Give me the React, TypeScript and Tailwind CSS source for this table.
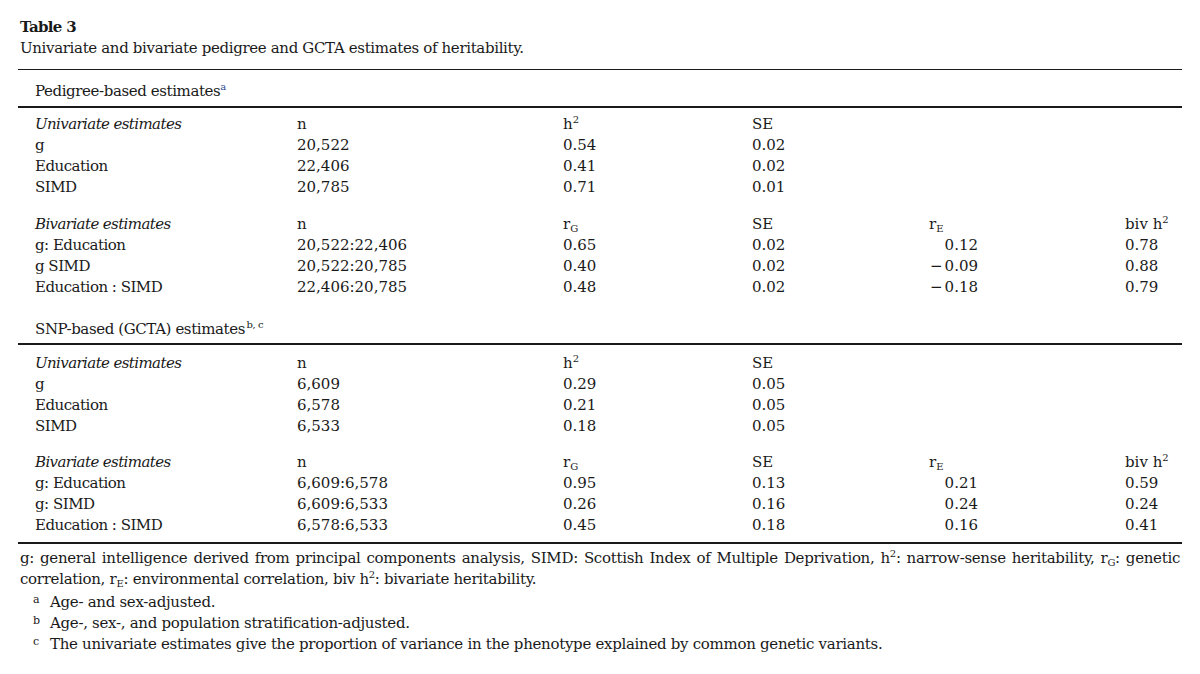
import React from 'react';

type Row = { label: React.ReactNode; cells: React.ReactNode[] };

const Sub = ({ children }: { children: React.ReactNode }) => (
	<span className="text-[10px] leading-none align-[-3px]">{children}</span>
);

const Sup = ({ children }: { children: React.ReactNode }) => (
	<span className="text-[10px] leading-none align-[6px]">{children}</span>
);

const RE = ({ v, neg }: { v: string; neg?: boolean }) => (
	<span className="inline-block w-[49px] text-right">
		{neg && <span className="mr-[2px]">−</span>}
		{v}
	</span>
);

const cols = 'grid grid-cols-[262px_266px_189px_177px_196px_1fr] h-[21px] items-center';

const Block = ({ head, rows }: { head: Row; rows: Row[] }) => (
	<div>
		<div className={cols}>
			<div className="italic tracking-[-0.6px]">{head.label}</div>
			{head.cells.map((c, i) => (
				<div key={i}>{c}</div>
			))}
		</div>
		{rows.map((r, i) => (
			<div key={i} className={cols}>
				<div className="tracking-[-0.5px]">{r.label}</div>
				{r.cells.map((c, j) => (
					<div key={j}>{c}</div>
				))}
			</div>
		))}
	</div>
);

const uniHead = (label: string): Row => ({
	label,
	cells: [
		'n',
		<>
			h<Sup>2</Sup>
		</>,
		'SE',
	],
});

const biHead = (label: string): Row => ({
	label,
	cells: [
		'n',
		<>
			r<Sub>G</Sub>
		</>,
		'SE',
		<>
			r<Sub>E</Sub>
		</>,
		<>
			biv h<Sup>2</Sup>
		</>,
	],
});

export default function App() {
	return (
		<div className="w-[1200px] h-[674px] bg-white text-[#1a1a1a] font-['DejaVu_Serif',serif] text-[15px] leading-[21px] px-[18px] pt-[17px]">
			<div className="font-bold px-[2px] tracking-[-0.7px]">Table 3</div>
			<div className="px-[2px] tracking-[-0.35px]">Univariate and bivariate pedigree and GCTA estimates of heritability.</div>

			<div className="mt-[10px] border-t-[1.5px] border-[#1a1a1a]" />
			<div className="pl-[17px] pt-[11px] pb-[4px] tracking-[-0.4px]">
				Pedigree-based estimates<Sup><span className="text-[#2b4a90]">a</span></Sup>
			</div>
			<div className="border-t-2 border-[#1a1a1a]" />

			<div className="pl-[17px] pt-[6px]">
				<Block
					head={uniHead('Univariate estimates')}
					rows={[
						{ label: 'g', cells: ['20,522', '0.54', '0.02'] },
						{ label: 'Education', cells: ['22,406', '0.41', '0.02'] },
						{ label: 'SIMD', cells: ['20,785', '0.71', '0.01'] },
					]}
				/>
				<div className="h-[16px]" />
				<Block
					head={biHead('Bivariate estimates')}
					rows={[
						{ label: 'g: Education', cells: ['20,522:22,406', '0.65', '0.02', <RE v="0.12" />, '0.78'] },
						{ label: 'g SIMD', cells: ['20,522:20,785', '0.40', '0.02', <RE v="0.09" neg />, '0.88'] },
						{ label: 'Education : SIMD', cells: ['22,406:20,785', '0.48', '0.02', <RE v="0.18" neg />, '0.79'] },
					]}
				/>
				<div className="pt-[21px] pb-[3px] tracking-[-0.4px]">
					SNP-based (GCTA) estimates<Sup>&thinsp;b, c</Sup>
				</div>
			</div>
			<div className="border-t-2 border-[#1a1a1a]" />

			<div className="pl-[17px] pt-[8px]">
				<Block
					head={uniHead('Univariate estimates')}
					rows={[
						{ label: 'g', cells: ['6,609', '0.29', '0.05'] },
						{ label: 'Education', cells: ['6,578', '0.21', '0.05'] },
						{ label: 'SIMD', cells: ['6,533', '0.18', '0.05'] },
					]}
				/>
				<div className="h-[15px]" />
				<Block
					head={biHead('Bivariate estimates')}
					rows={[
						{ label: 'g: Education', cells: ['6,609:6,578', '0.95', '0.13', <RE v="0.21" />, '0.59'] },
						{ label: 'g: SIMD', cells: ['6,609:6,533', '0.26', '0.16', <RE v="0.24" />, '0.24'] },
						{ label: 'Education : SIMD', cells: ['6,578:6,533', '0.45', '0.18', <RE v="0.16" />, '0.41'] },
					]}
				/>
			</div>
			<div className="mt-[6px] border-t-2 border-[#1a1a1a]" />

			<div className="pt-[4px] px-[2px] tracking-[-0.3px]">
				<p className="text-justify [text-align-last:justify]">
					g: general intelligence derived from principal components analysis, SIMD: Scottish Index of Multiple
					Deprivation, h<Sup>2</Sup>: narrow-sense heritability, r<Sub>G</Sub>: genetic
				</p>
				<p>
					correlation, r<Sub>E</Sub>: environmental correlation, biv h<Sup>2</Sup>: bivariate heritability.
				</p>
				<div className="flex pl-[13px] mt-[2px]">
					<span className="w-[17px] text-[11px] leading-none pt-[2px]">a</span>
					<span>Age- and sex-adjusted.</span>
				</div>
				<div className="flex pl-[13px]">
					<span className="w-[17px] text-[11px] leading-none pt-[2px]">b</span>
					<span>Age-, sex-, and population stratification-adjusted.</span>
				</div>
				<div className="flex pl-[13px]">
					<span className="w-[17px] text-[11px] leading-none pt-[2px]">c</span>
					<span>The univariate estimates give the proportion of variance in the phenotype explained by common genetic variants.</span>
				</div>
			</div>
		</div>
	);
}
